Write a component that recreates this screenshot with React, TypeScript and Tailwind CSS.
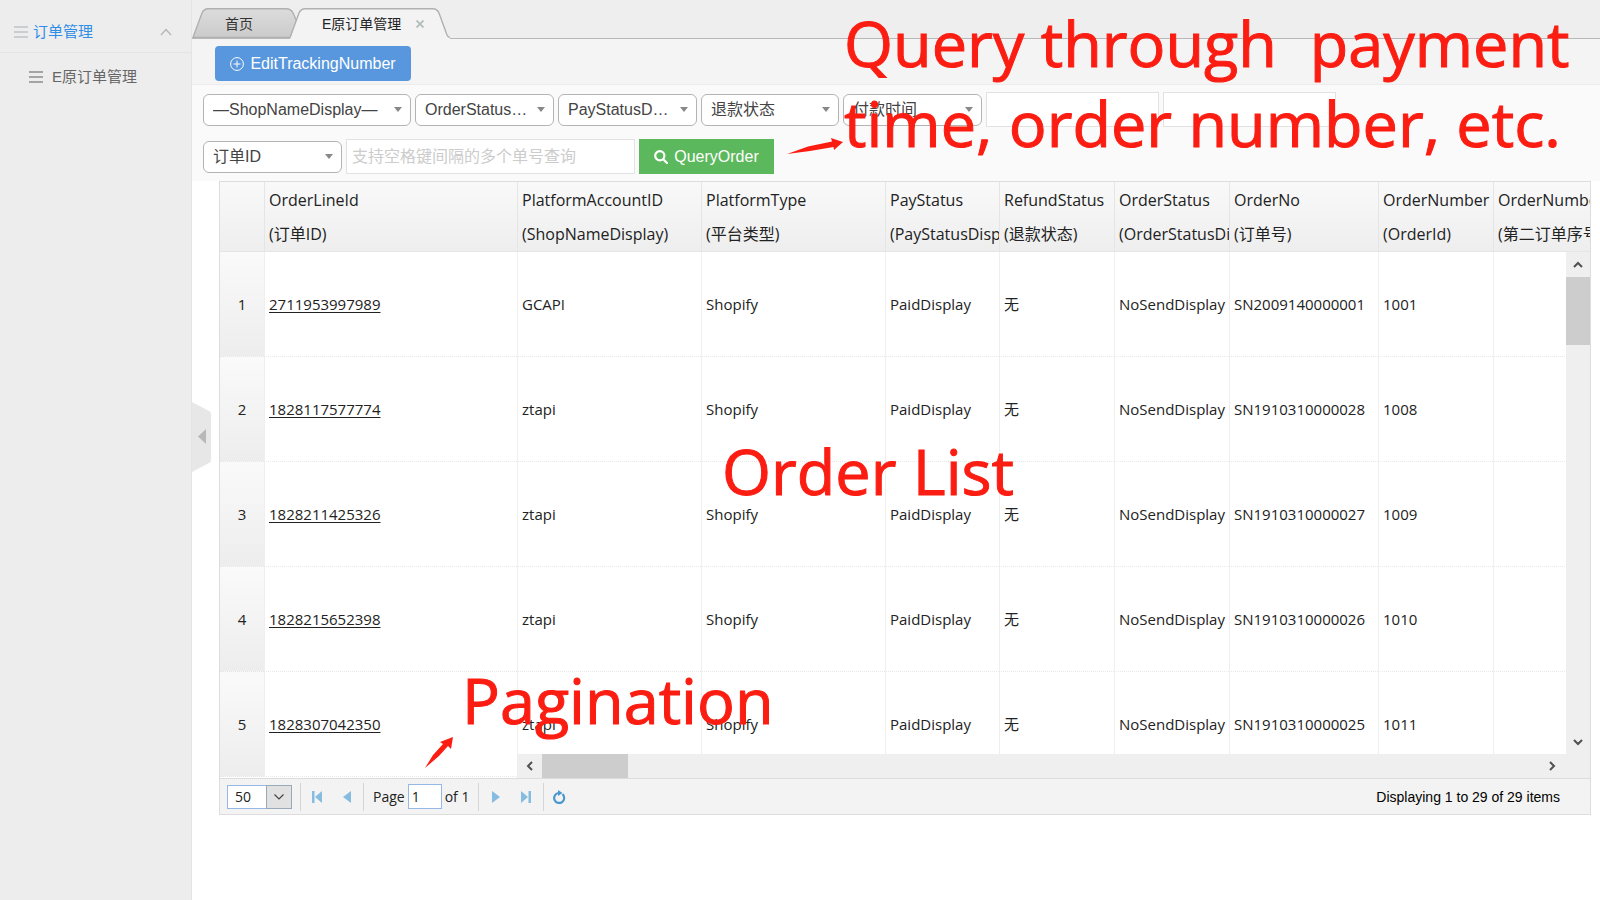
import { useState } from "react";
import type { ReactNode } from "react";

type Column = {
  title: string;
  sub: string;
  width: string;
};

type Order = {
  id: string;
  account: string;
  no: string;
  number: string;
};

const columns: Column[] = [
  { title: "PlatformAccountID", sub: "(ShopNameDisplay)", width: "w-[184px]" },
  { title: "PlatformType", sub: "(平台类型)", width: "w-[184px]" },
  { title: "PayStatus", sub: "(PayStatusDisplay)", width: "w-[114px]" },
  { title: "RefundStatus", sub: "(退款状态)", width: "w-[115px]" },
  { title: "OrderStatus", sub: "(OrderStatusDisplay)", width: "w-[115px]" },
  { title: "OrderNo", sub: "(订单号)", width: "w-[149px]" },
  { title: "OrderNumber", sub: "(OrderId)", width: "w-[115px]" },
  { title: "OrderNumber2", sub: "(第二订单序号)", width: "w-[184px]" },
];

const orders: Order[] = [
  { id: "2711953997989", account: "GCAPI", no: "SN2009140000001", number: "1001" },
  { id: "1828117577774", account: "ztapi", no: "SN1910310000028", number: "1008" },
  { id: "1828211425326", account: "ztapi", no: "SN1910310000027", number: "1009" },
  { id: "1828215652398", account: "ztapi", no: "SN1910310000026", number: "1010" },
  { id: "1828307042350", account: "ztapi", no: "SN1910310000025", number: "1011" },
];

const headCell =
  "h-[70px] overflow-hidden whitespace-nowrap border-b border-l border-[#e5e5e5] pl-1 text-left align-middle text-base font-normal leading-[34px]";
const bodyCell =
  "h-[105px] overflow-hidden whitespace-nowrap border-b border-l border-b-[#e9e9e9] border-l-[#efefef] [border-bottom-style:dotted] pl-1 align-middle";

const MenuIcon = ({ className }: { className: string }) => (
  <svg viewBox="0 0 14 12" className={`h-3 w-3.5 shrink-0 ${className}`} fill="none" stroke="currentColor" strokeWidth="1.5">
    <path d="M0 1h14M0 6h14M0 11h14" />
  </svg>
);

const Sidebar = () => (
  <aside className="w-48 shrink-0 border-r border-[#e4e4e4] bg-[#ededed] text-[15px]">
    <a href="#orders" className="flex h-[53px] items-center border-b border-[#e4e4e4] pt-3 pr-[19px] pl-3.5 text-[#2f8ee6]">
      <MenuIcon className="text-[#bfc3c8]" />
      <span className="ml-[5px] flex-1">订单管理</span>
      <svg viewBox="0 0 12 8" className="h-2 w-3" fill="none" stroke="#b4b4b4" strokeWidth="1.2">
        <path d="M1 7l5-5.5L11 7" />
      </svg>
    </a>
    <a href="#order-list" className="flex h-12 items-center pl-[29px] text-[#666]">
      <MenuIcon className="text-[#8c8c8c]" />
      <span className="ml-[9px]">E原订单管理</span>
    </a>
  </aside>
);

const Tabs = () => (
  <div role="tablist" className="flex h-[39px] items-end border-b border-[#b8b8b8] bg-[#eeeeef] text-sm text-[#333]">
    <button type="button" role="tab" aria-selected="false" className="relative h-[30px] w-[106px]">
      <svg viewBox="0 0 106 30" className="absolute inset-0 h-full w-full">
        <defs>
          <linearGradient id="tabFill" x1="0" y1="0" x2="0" y2="1">
            <stop offset="0" stopColor="#dcdcdc" />
            <stop offset="1" stopColor="#cbcbcb" />
          </linearGradient>
        </defs>
        <path d="M1 29.5 10 5Q12 .8 16 .8H94Q99 .8 101 5L106 16 98 29.5Z" fill="url(#tabFill)" stroke="#b0b0b0" strokeWidth="1.4" />
      </svg>
      <span className="relative block pt-px pr-3">首页</span>
    </button>
    <div role="tab" aria-selected="true" className="relative -mb-px -ml-2 flex h-[31px] w-[160px] items-center pt-px">
      <svg viewBox="0 0 160 31" className="absolute inset-0 h-full w-full">
        <path d="M0 31 9 5Q11 .8 15 .8H143Q147 .8 149 5L157 27Q158 29.5 160 29.5V31Z" fill="#f3f3f4" />
        <path d="M0 29.5 9 5Q11 .8 15 .8H143Q147 .8 149 5L157 27Q158 29.5 160 29.5" fill="none" stroke="#b0b0b0" strokeWidth="1.4" />
      </svg>
      <span className="relative pl-8 text-[#222]">E原订单管理</span>
      <button type="button" aria-label="Close tab" className="relative ml-[11px] p-1">
        <svg viewBox="0 0 8 8" className="h-2 w-2" stroke="#b3bcbc" strokeWidth="1.8">
          <path d="M.5.5l7 7M7.5.5l-7 7" />
        </svg>
      </button>
    </div>
  </div>
);

const Select = ({ label, text, className }: { label: string; text: string; className: string }) => (
  <div className={`relative h-8 shrink-0 ${className}`}>
    <select aria-label={label} className="h-full w-full appearance-none rounded-md border border-[#b4b4b4] bg-white pr-5 pl-[9px] text-base text-[#444]">
      <option>{text}</option>
    </select>
    <svg viewBox="0 0 8 5" className="pointer-events-none absolute top-[13px] right-[9px] h-[5px] w-2" fill="#888">
      <path d="M0 0h8L4 5z" />
    </svg>
  </div>
);

const Filters = () => {
  const [from, setFrom] = useState("");
  const [to, setTo] = useState("");
  const [query, setQuery] = useState("");
  const box = "h-[35px] border border-[#e2e2e2] bg-white px-[5px] text-base";

  return (
    <form className="flex flex-col gap-3 bg-[#fafafa] py-[7px] pl-[11px]" onSubmit={(e) => e.preventDefault()}>
      <div className="flex items-center gap-1">
        <Select label="Shop" text="—ShopNameDisplay—" className="w-[208px]" />
        <Select label="Order status" text="OrderStatus…" className="w-[139px]" />
        <Select label="Pay status" text="PayStatusD…" className="w-[139px]" />
        <Select label="退款状态" text="退款状态" className="w-[138px]" />
        <Select label="付款时间" text="付款时间" className="w-[139px]" />
        <input aria-label="From" value={from} onChange={(e) => setFrom(e.target.value)} className={`${box} w-[173px]`} />
        <input aria-label="To" value={to} onChange={(e) => setTo(e.target.value)} className={`${box} w-[173px]`} />
      </div>
      <div className="flex items-center gap-1">
        <Select label="Search by" text="订单ID" className="w-[139px]" />
        <input
          aria-label="Order numbers"
          placeholder="支持空格键间隔的多个单号查询"
          value={query}
          onChange={(e) => setQuery(e.target.value)}
          className={`${box} w-[289px] placeholder:text-[#ccc]`}
        />
        <button type="submit" className="flex h-[35px] w-[135px] items-center justify-center gap-1.5 bg-[#5cb85c] text-base text-white">
          <svg viewBox="0 0 14 14" className="h-3.5 w-3.5" fill="none" stroke="currentColor" strokeWidth="2.2">
            <circle cx="5.8" cy="5.8" r="4.6" />
            <path d="M9.2 9.2l3.8 3.8" strokeLinecap="round" />
          </svg>
          QueryOrder
        </button>
      </div>
    </form>
  );
};

const ScrollButton = ({ label, d, className }: { label: string; d: string; className: string }) => (
  <button type="button" aria-label={label} className={`flex shrink-0 items-center justify-center ${className}`}>
    <svg viewBox="0 0 10 10" className="h-2.5 w-2.5" fill="none" stroke="#505050" strokeWidth="2">
      <path d={d} />
    </svg>
  </button>
);

const PagerButton = ({ label, children }: { label: string; children: ReactNode }) => (
  <button type="button" aria-label={label} className="flex h-6 w-[30px] items-center justify-center">
    {children}
  </button>
);

const Divider = () => <span className="h-7 w-px shrink-0 bg-[#d6d6d6]" />;

const Pager = () => {
  const [page, setPage] = useState("1");
  return (
    <div className="flex h-9 items-center border-t border-[#ddd] bg-[#f3f3f3] pl-[7px] text-sm text-[#222]">
      <div className="relative mr-2 h-6 w-[65px]">
        <select aria-label="Page size" className="h-full w-full appearance-none border border-[#95b8e7] bg-white pl-[7px]">
          <option>50</option>
        </select>
        <span className="pointer-events-none absolute inset-y-0 right-0 flex w-[26px] items-center justify-center border border-[#9aa9b8] bg-[#e1e1e1]">
          <svg viewBox="0 0 10 6" className="h-1.5 w-2.5" fill="none" stroke="#444" strokeWidth="1.2">
            <path d="M.5.5L5 5 9.500.5" />
          </svg>
        </span>
      </div>
      <Divider />
      <div className="flex px-px">
        <PagerButton label="First page">
          <svg viewBox="0 0 10 12" className="h-3 w-2.5" fill="#86bce0">
            <path d="M0 0h2.500v12H0zM10 0v12L3 6z" />
          </svg>
        </PagerButton>
        <PagerButton label="Previous page">
          <svg viewBox="0 0 8 12" className="h-3 w-2" fill="#86bce0">
            <path d="M8 0v12L0 6z" />
          </svg>
        </PagerButton>
      </div>
      <Divider />
      <label htmlFor="page" className="ml-[9px]">Page</label>
      <input
        id="page"
        value={page}
        onChange={(e) => setPage(e.target.value)}
        className="mx-[3px] h-[25px] w-[34px] border border-[#95b8e7] bg-white px-[3px]"
      />
      <span className="mr-[9px]">of 1</span>
      <Divider />
      <div className="flex px-0.5">
        <PagerButton label="Next page">
          <svg viewBox="0 0 8 12" className="h-3 w-2" fill="#86bce0">
            <path d="M0 0v12l8-6z" />
          </svg>
        </PagerButton>
        <PagerButton label="Last page">
          <svg viewBox="0 0 10 12" className="h-3 w-2.5" fill="#86bce0">
            <path d="M7.500 0H10v12H7.500zM0 0v12l7-6z" />
          </svg>
        </PagerButton>
      </div>
      <Divider />
      <PagerButton label="Refresh">
        <svg viewBox="0 0 14 14" className="h-3.5 w-3.5" fill="none" stroke="#4a97cf" strokeWidth="2.2">
          <path d="M10.500 4.200A5 5 0 1 1 6.500 3" />
          <path d="M6 0l4.500 3L6 6z" fill="#4a97cf" stroke="none" />
        </svg>
      </PagerButton>
      <span className="ml-auto pr-[30px] font-['Liberation_Sans',Arial,sans-serif] text-black">Displaying 1 to 29 of 29 items</span>
    </div>
  );
};

const OrderGrid = () => (
  <section className="mr-[9px] ml-[27px] border border-[#ddd] font-['Open_Sans','Noto_Sans_CJK_SC',sans-serif] text-[15px] text-[#222]">
    <div className="flex">
      <table className="w-[297px] shrink-0 table-fixed self-start border-separate border-spacing-0">
        <thead>
          <tr className="bg-linear-to-b from-[#f9f9f9] to-[#eeeeee]">
            <th className="w-11 border-b border-[#e5e5e5]" />
            <th className={headCell}>
              OrderLineId
              <br />
              (订单ID)
            </th>
          </tr>
        </thead>
        <tbody>
          {orders.map((order, idx) => (
            <tr key={order.id}>
              <td className="h-[105px] border-b border-dotted border-[#e4e4e4] bg-linear-to-b from-[#fafafa] to-[#ededed] text-center">
                {idx + 1}
              </td>
              <td className={bodyCell}>
                <a href={`#${order.id}`} className="underline underline-offset-2">{order.id}</a>
              </td>
            </tr>
          ))}
        </tbody>
      </table>

      {/* scrollable columns */}
      <div className="relative h-[596px] min-w-0 flex-1 overflow-hidden">
        <div className="absolute inset-x-0 top-0 h-[70px] border-b border-[#e5e5e5] bg-linear-to-b from-[#f9f9f9] to-[#eeeeee]" />
        <table className="relative w-[1160px] table-fixed border-separate border-spacing-0">
          <thead>
            <tr>
              {columns.map((col) => (
                <th key={col.title} className={`${headCell} ${col.width}`}>
                  {col.title}
                  <br />
                  {col.sub}
                </th>
              ))}
            </tr>
          </thead>
          <tbody>
            {orders.map((order) => (
              <tr key={order.id}>
                <td className={bodyCell}>{order.account}</td>
                <td className={bodyCell}>Shopify</td>
                <td className={bodyCell}>PaidDisplay</td>
                <td className={bodyCell}>无</td>
                <td className={bodyCell}>NoSendDisplay</td>
                <td className={bodyCell}>{order.no}</td>
                <td className={bodyCell}>{order.number}</td>
                <td className={bodyCell} />
              </tr>
            ))}
          </tbody>
        </table>

        <div className="absolute top-[70px] right-0 bottom-0 flex w-6 flex-col bg-[#efefef]">
          <ScrollButton label="Scroll up" d="M1 7l4-4 4 4" className="h-[25px]" />
          <div className="h-[68px] bg-[#cdcdcd]" />
          <ScrollButton label="Scroll down" d="M1 3l4 4 4-4" className="mt-auto mb-6 h-[25px]" />
        </div>
        <div className="absolute right-6 bottom-0 left-0 flex h-6 bg-[#efefef]">
          <ScrollButton label="Scroll left" d="M7 1L3 5l4 4" className="w-[25px]" />
          <div className="w-[86px] bg-[#cdcdcd]" />
          <ScrollButton label="Scroll right" d="M3 1l4 4-4 4" className="ml-auto w-7" />
        </div>
      </div>
    </div>
    <Pager />
  </section>
);

const Notes = () => (
  <div className="pointer-events-none absolute inset-0 font-['Open_Sans',sans-serif] text-[63px] leading-[80px] text-[#fb1d12] [-webkit-text-stroke:1px_#fb1d12]">
    <p className="absolute top-[3px] left-[844px] whitespace-pre">{"Query through  payment\ntime, order number, etc."}</p>
    <p className="absolute top-[431px] left-[722px] whitespace-nowrap">Order List</p>
    <p className="absolute top-[660px] left-[462px] whitespace-nowrap">Pagination</p>
    <svg viewBox="0 0 58 18" className="absolute top-[137px] left-[786px] h-[18px] w-[58px]" fill="currentColor" stroke="none">
      <path d="M1 17 22 9.500 46 4.500 45 1 57 5 48 13 47.500 10 24 14Z" />
    </svg>
    <svg viewBox="0 0 28 32" className="absolute top-[736px] left-[425px] h-8 w-7" fill="currentColor" stroke="none">
      <path d="M0 32 8 19 18 8 15 6 28 1 26 13 23 10 14 20Z" />
    </svg>
  </div>
);

const App = () => (
  <div className="relative flex min-h-screen overflow-hidden bg-white font-['Liberation_Sans','Noto_Sans_CJK_SC',sans-serif]">
    <Sidebar />
    <main className="relative min-w-0 flex-1">
      <Tabs />
      <div className="border-b border-[#ececec] bg-[#f4f4f4] pt-[7px] pb-[3px] pl-[23px]">
        <button type="button" className="flex h-[35px] w-[196px] items-center justify-center gap-1.5 rounded bg-[#5897dd] text-base text-white">
          <svg viewBox="0 0 14 14" className="h-3.5 w-3.5" fill="none" stroke="currentColor" strokeWidth="1">
            <circle cx="7" cy="7" r="6.400" />
            <path d="M7 3.500v7M3.500 7h7" />
          </svg>
          EditTrackingNumber
        </button>
      </div>
      <Filters />
      <OrderGrid />
      <button type="button" aria-label="Collapse menu" className="absolute top-[402px] left-0 h-[70px] w-5">
        <svg viewBox="0 0 20 70" className="h-full w-full">
          <path d="M0 0 17 9Q19 10 19 12V58Q19 60 17 61L0 70Z" fill="#e7e7e7" />
          <path d="M14 27V42L6 34.500Z" fill="#b8b8b8" />
        </svg>
      </button>
    </main>
    <Notes />
  </div>
);

export default App;
